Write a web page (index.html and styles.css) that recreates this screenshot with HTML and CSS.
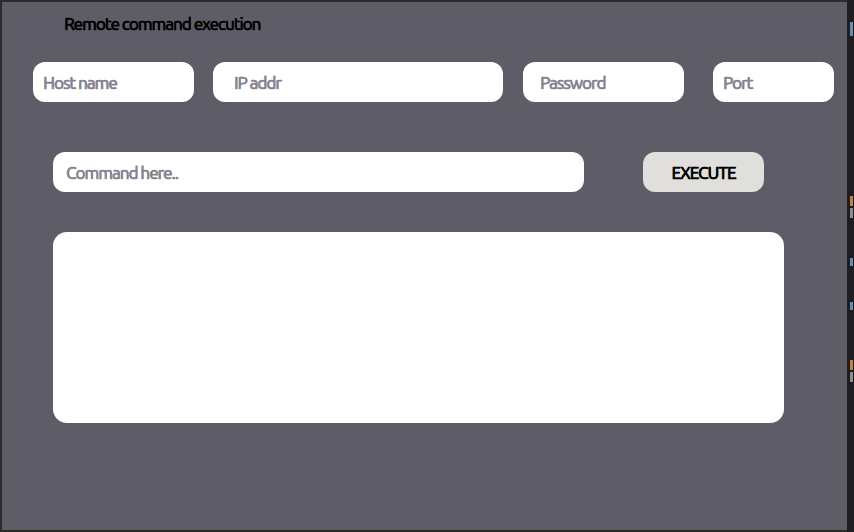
FILE: index.html
```html
<!DOCTYPE html>
<html>
<head>
<meta charset="utf-8">
<link rel="stylesheet" href="styles.css">
</head>
<body>
<div class="screen">
  <main class="panel">
    <h1 class="title">Remote command execution</h1>
    <div class="row-conn">
      <input class="field f-host" type="text" placeholder="Host name">
      <input class="field f-ip" type="text" placeholder="IP addr">
      <input class="field f-pass" type="password" placeholder="Password">
      <input class="field f-port" type="text" placeholder="Port">
    </div>
    <div class="row-cmd">
      <input class="field f-cmd" type="text" placeholder="Command here..">
      <button class="exec">EXECUTE</button>
    </div>
    <div class="output"></div>
  </main>
  <aside class="edge">
    <span class="mark m1"></span>
    <span class="mark m2"></span>
    <span class="mark m3"></span>
    <span class="mark m4"></span>
    <span class="mark m5"></span>
    <span class="mark m6"></span>
    <span class="mark m7"></span>
  </aside>
</div>
</body>
</html>
```
FILE: styles.css
```css
html, body {
  margin: 0;
  padding: 0;
  background: #2b2b2b;
  width: 854px;
  height: 532px;
  overflow: hidden;
}
.screen {
  display: flex;
  height: 532px;
}
.panel {
  box-sizing: border-box;
  width: 845px;
  height: 528px;
  margin: 2px 0 2px 2px;
  background: #5e5c66;
  font-family: "Ubuntu", "Open Sans", sans-serif;
  padding: 12px 0 0 0;
}
.title {
  margin: 0 0 0 62px;
  font-size: 17px;
  line-height: 20px;
  font-weight: normal;
  color: #000;
  letter-spacing: -0.95px;
  -webkit-text-stroke: 0.55px #000;
  text-shadow: 0.4px 0 0 #000;
}
.row-conn {
  display: flex;
  margin: 28px 0 0 31px;
  height: 40px;
}
.field {
  box-sizing: border-box;
  height: 40px;
  border: none;
  outline: none;
  background: #fff;
  border-radius: 12px;
  font-family: inherit;
  font-size: 17px;
  font-weight: normal;
  color: #333;
  letter-spacing: -0.95px;
  padding: 0 10px;
}
.field::placeholder {
  color: #858390;
  -webkit-text-stroke: 0.6px #858390;
  text-shadow: 0.4px 0 0 #858390;
}
.f-host { width: 161px; }
.f-ip { width: 290px; margin-left: 19px; padding-left: 21px; }
.f-pass { width: 161px; margin-left: 20px; padding-left: 17px; }
.f-port { width: 121px; margin-left: 29px; }
.row-cmd {
  display: flex;
  margin: 50px 0 0 51px;
  height: 40px;
}
.f-cmd { width: 531px; padding-left: 13px; }
.exec {
  box-sizing: border-box;
  width: 121px;
  height: 40px;
  margin-left: 59px;
  border: none;
  border-radius: 12px;
  background: #e0dfdc;
  color: #000;
  font-family: inherit;
  font-size: 17px;
  font-weight: normal;
  letter-spacing: -0.9px;
  -webkit-text-stroke: 0.7px #000;
  text-shadow: 0.4px 0 0 #000;
}
.output {
  width: 731px;
  height: 191px;
  margin: 40px 0 0 51px;
  background: #fff;
  border-radius: 14px;
}
.edge {
  flex: 1;
  background: #1e1e22;
  display: flex;
  flex-direction: column;
  padding-top: 20px;
}
.mark {
  display: block;
  width: 3px;
  margin-left: 3px;
}
.m1 { height: 14px; background: #6a8cb0; margin-top: 2px; }
.m2 { height: 10px; background: #c08040; margin-top: 160px; }
.m3 { height: 10px; background: #8c8c8c; margin-top: 2px; }
.m4 { height: 8px; background: #6a8cb0; margin-top: 40px; }
.m5 { height: 8px; background: #6a8cb0; margin-top: 36px; }
.m6 { height: 10px; background: #c08040; margin-top: 50px; }
.m7 { height: 10px; background: #8c8c8c; margin-top: 2px; }
```
